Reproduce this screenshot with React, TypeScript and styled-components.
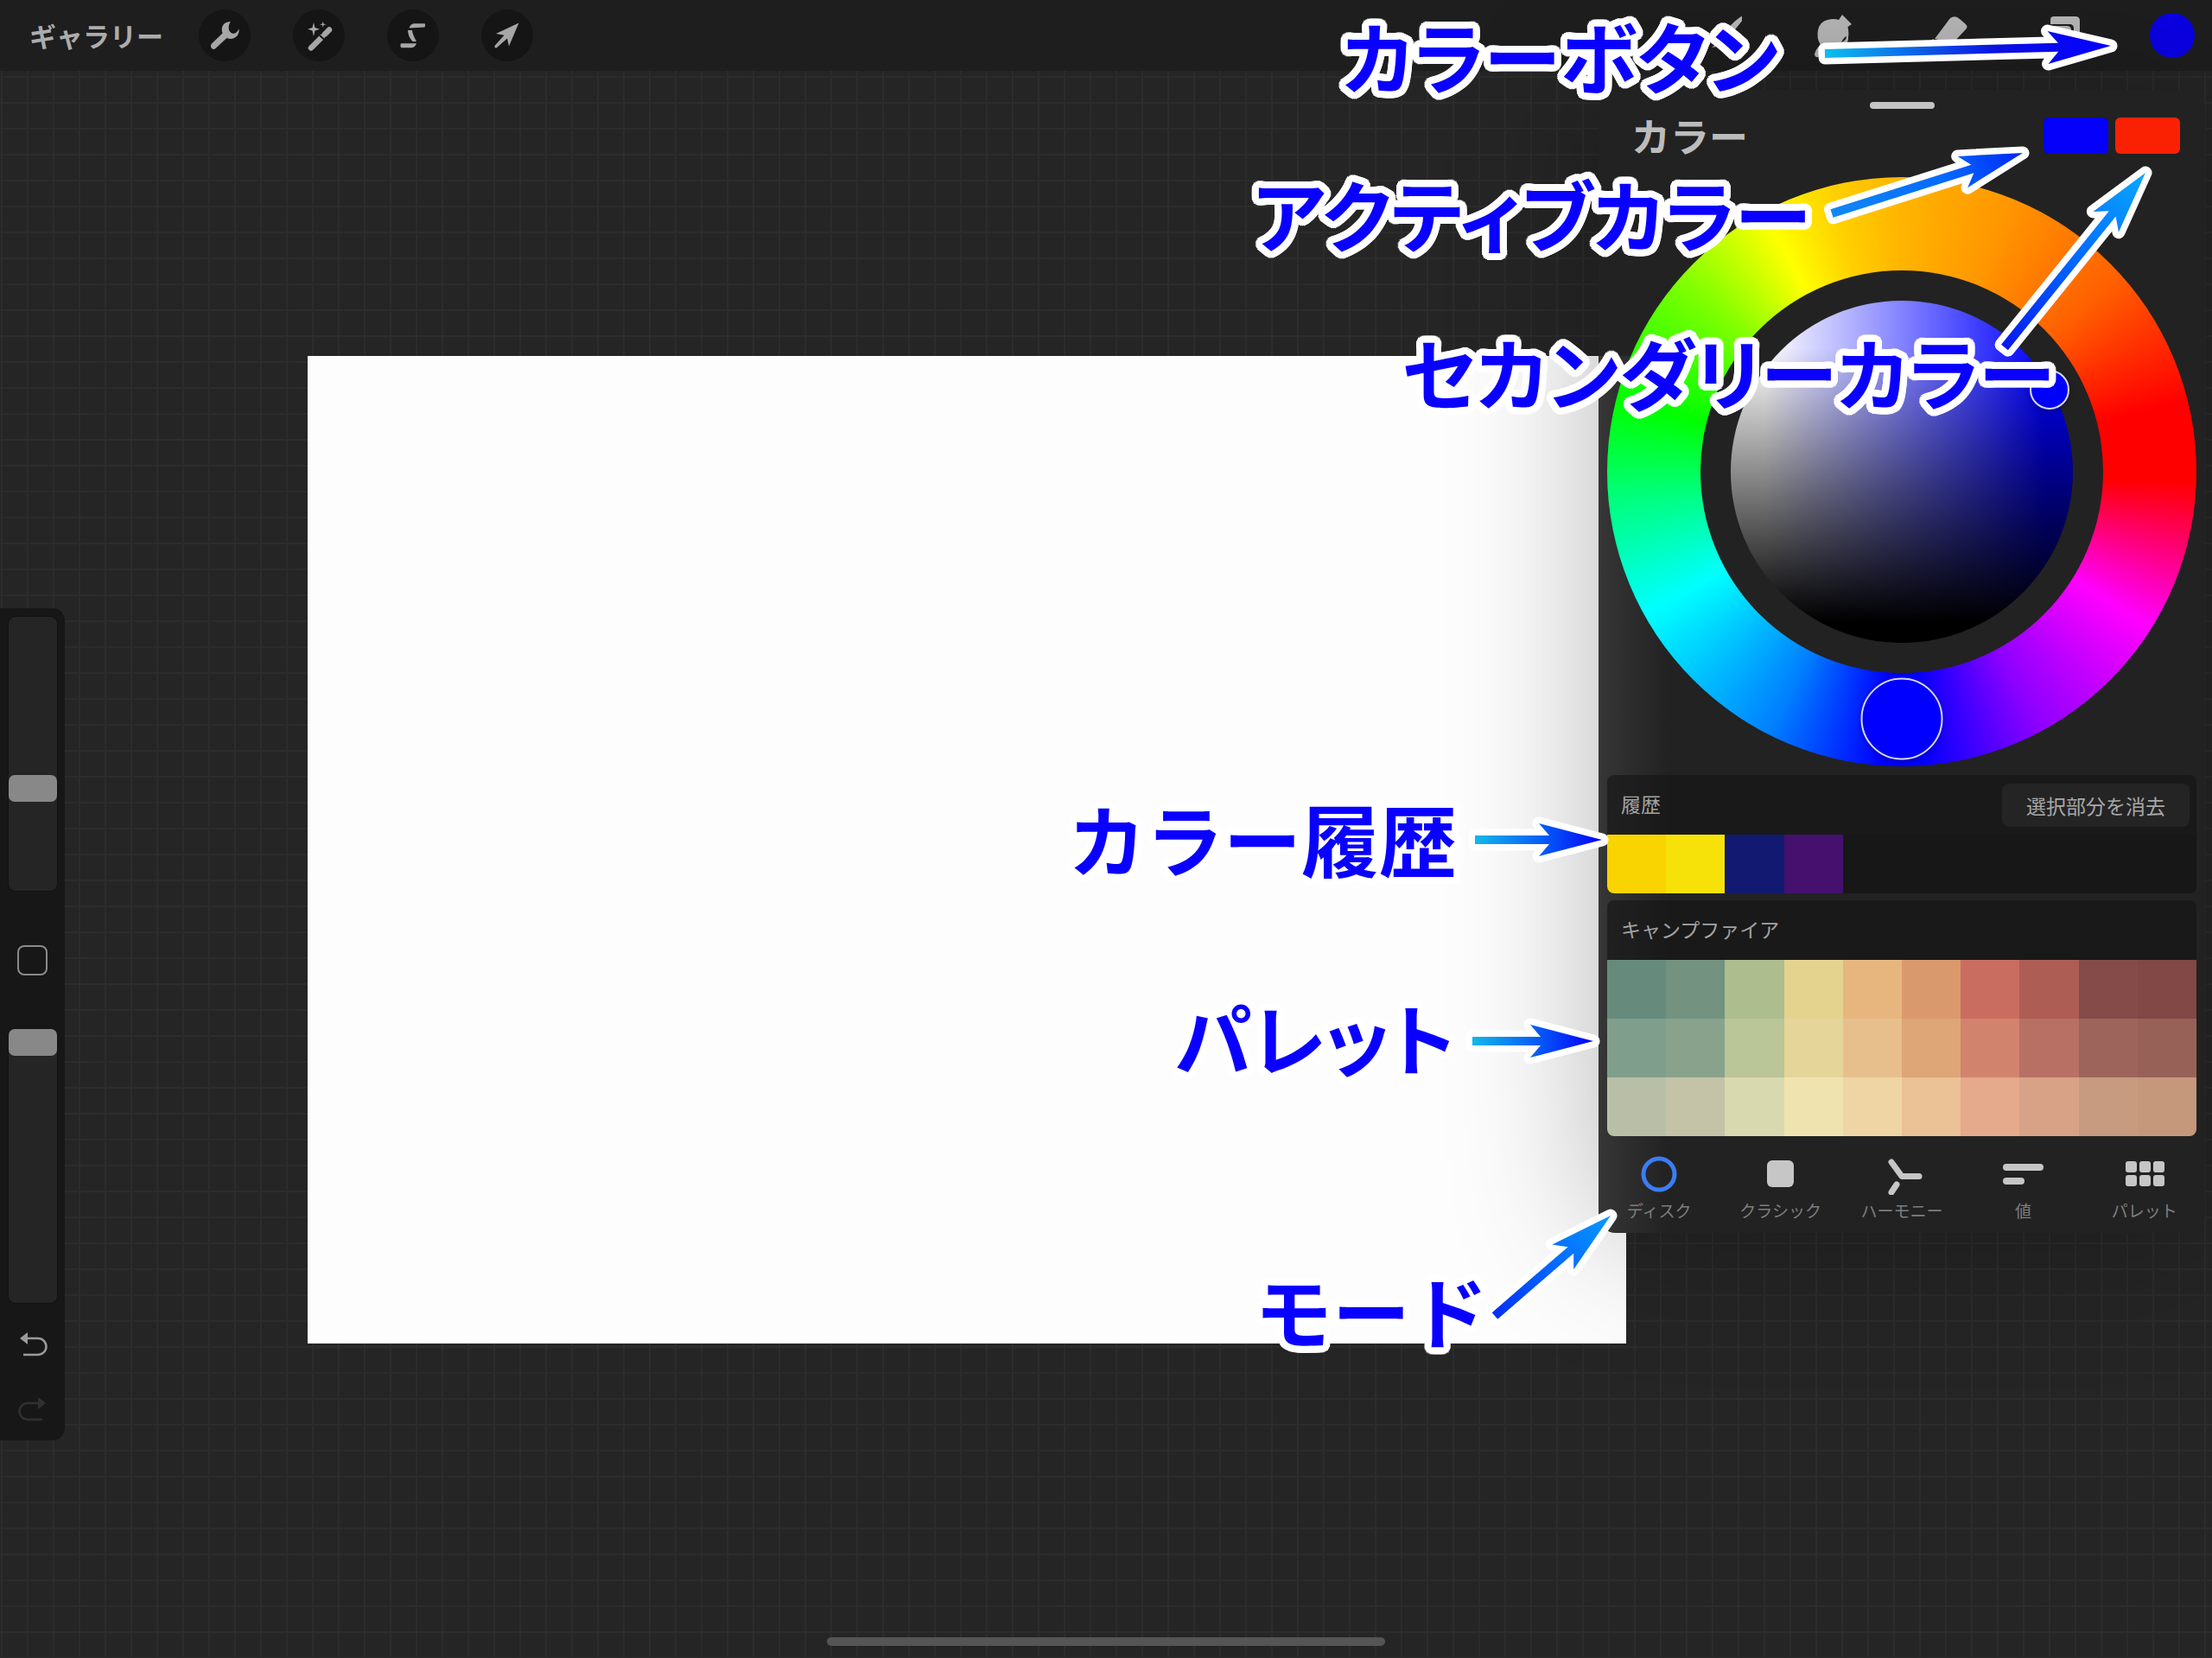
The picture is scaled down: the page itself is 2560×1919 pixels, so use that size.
import React from "react";
import styled, { createGlobalStyle } from "styled-components";

const GlobalStyle = createGlobalStyle`
  *, *::before, *::after { box-sizing: border-box; }
  html, body { margin: 0; background: #252525; }
  body, button, input {
    font-family: "Noto Sans CJK JP", "Noto Sans", sans-serif;
  }
  button { padding: 0; border: 0; background: none; color: inherit; cursor: pointer; }
`;

const Screen = styled.div`
  position: relative;
  display: flex;
  flex-direction: column;
  min-height: 100vh;
  overflow: hidden;
`;

/* ---------- toolbar ---------- */

const Toolbar = styled.header`
  display: flex;
  align-items: center;
  justify-content: space-between;
  height: 82px;
  padding: 0 20px 0 34px;
  background: #1e1e1e;
`;

const ToolGroup = styled.div<{ $gap: number }>`
  display: flex;
  align-items: center;
  gap: ${(p) => p.$gap}px;
`;

const GalleryButton = styled.button`
  width: 160px;
  margin-right: -13px;
  color: #acacac;
  font-size: 31px;
  font-weight: 700;
  line-height: 40px;
  text-align: left;
  white-space: nowrap;
`;

const RoundButton = styled.button`
  display: block;
  width: 60px;
  height: 60px;
  border-radius: 50%;
  background: #151515;
  color: #a6a6a6;
`;

const PlainButton = styled(RoundButton)`
  background: none;
  color: #b8b8b8;
`;

const ColorButton = styled.button`
  width: 52px;
  height: 52px;
  border-radius: 50%;
  background: #0a00e6;
`;

/* ---------- workspace ---------- */

const Workspace = styled.main`
  position: relative;
  display: flex;
  flex: 1;
  align-items: flex-start;
  padding-top: 622px;
  background-color: #252525;
  background-image:
    linear-gradient(#2c2c2c 2px, transparent 2px),
    linear-gradient(90deg, #2c2c2c 2px, transparent 2px);
  background-size: 30px 30px;
  background-position: 1px 6px;
`;

const Artboard = styled.div`
  position: absolute;
  top: 330px;
  left: 356px;
  width: 1526px;
  height: 1143px;
  background: #fdfdfd;
`;

const Sidebar = styled.aside`
  position: relative;
  display: flex;
  flex-direction: column;
  align-items: center;
  width: 75px;
  height: 963px;
  padding-top: 10px;
  border-radius: 0 14px 14px 0;
  background: #171717;
`;

const Slider = styled.input`
  appearance: none;
  writing-mode: vertical-lr;
  direction: rtl;
  width: 56px;
  height: 317px;
  margin: 0;
  border-radius: 8px;
  background: #252525;
  box-shadow: 0 0 0 1px #121212;

  &::-webkit-slider-thumb {
    appearance: none;
    width: 56px;
    height: 31px;
    border-radius: 7px;
    background: #888;
  }
`;

const ModifyButton = styled.button`
  width: 35px;
  height: 35px;
  margin: 63px 0 62px;
  border: 2px solid #8a8a8a;
  border-radius: 8px;
`;

const HistoryButton = styled.button<{ $color: string }>`
  display: block;
  width: 40px;
  height: 40px;
  margin-top: 29px;
  color: ${(p) => p.$color};

  & + & { margin-top: 35px; }
`;

const HomeIndicator = styled.div`
  position: absolute;
  bottom: 14px;
  left: 50%;
  width: 646px;
  height: 10px;
  border-radius: 5px;
  background: #555;
  transform: translateX(-50%);
`;

/* ---------- colour panel ---------- */

const Panel = styled.section`
  position: absolute;
  top: 22px;
  right: 8px;
  width: 702px;
  padding: 14px 10px 0;
  border-radius: 20px;
  background: linear-gradient(90deg, #363636, #222 80px) 0 308px no-repeat #222;
  box-shadow: 0 0 170px rgba(0, 0, 0, 0.28);
`;

const Grabber = styled.div`
  width: 75px;
  height: 8px;
  margin: 0 auto 10px;
  border-radius: 4px;
  background: #c4c4c4;
`;

const PanelHeader = styled.div`
  display: flex;
  align-items: center;
  gap: 8px;
  height: 42px;
  padding: 0 19px 0 28px;
`;

const PanelTitle = styled.h1`
  flex: 1;
  margin: 0;
  color: #bcbcbc;
  font-size: 45px;
  font-weight: 700;
  line-height: 42px;
`;

const ChosenColor = styled.button<{ $color: string }>`
  width: 75px;
  height: 42px;
  border-radius: 6px;
  background: ${(p) => p.$color};
`;

const Wheel = styled.div`
  position: relative;
  display: grid;
  place-items: center;
  aspect-ratio: 1;
  margin: 27px 0 10px;
  border-radius: 50%;
  background: conic-gradient(
    #ffb400 0deg, #ff9600 22deg, #ff6000 48deg, #ff0000 76deg, #ff0000 92deg,
    #ff0080 107deg, #ff00ff 122deg, #8c00ff 152deg, #0000ff 176deg, #0000ff 184deg,
    #0080ff 207deg, #00ffff 241deg, #00ff80 264deg, #00ff00 284deg, #80ff00 311deg,
    #ffff00 332deg, #ffd000 346deg, #ffb400 360deg
  );
`;

const WheelHole = styled.div`
  display: grid;
  place-items: center;
  width: 68.4%;
  aspect-ratio: 1;
  border-radius: 50%;
  background: #222;
`;

const ShadeDisc = styled.div`
  width: 84.8%;
  aspect-ratio: 1;
  border-radius: 50%;
  background:
    linear-gradient(transparent 14%, rgba(0, 0, 0, 0.45) 50%, #000 94%),
    linear-gradient(90deg, #fff 10%, #00f 92%);
`;

const WheelMarker = styled.div<{ $size: number; $x: number; $y: number }>`
  position: absolute;
  top: ${(p) => p.$y}%;
  left: ${(p) => p.$x}%;
  width: ${(p) => p.$size}px;
  height: ${(p) => p.$size}px;
  border: 2px solid #d8d8fa;
  border-radius: 50%;
  background: #00f;
  box-shadow: 0 2px 6px rgba(0, 0, 0, 0.3);
  transform: translate(-50%, -50%);
`;

const SwatchSection = styled.section`
  margin-bottom: 8px;
  border-radius: 8px;
  background: rgba(20, 20, 20, 0.6);
`;

const SectionHeader = styled.div`
  display: flex;
  align-items: center;
  justify-content: space-between;
  height: 69px;
  padding: 0 8px 0 16px;
`;

const SectionTitle = styled.h2`
  margin: 0;
  padding-bottom: 4px;
  color: #a2a2a2;
  font-size: 23px;
  font-weight: 400;
  line-height: 32px;
`;

const ClearButton = styled.button`
  width: 217px;
  height: 50px;
  border-radius: 8px;
  background: #242424;
  color: #a8a8a8;
  font-size: 23px;
  line-height: 32px;
`;

const SwatchGrid = styled.div`
  display: grid;
  grid-template-columns: repeat(10, 1fr);
  grid-auto-rows: 68px;
  overflow: hidden;
  border-radius: 0 0 8px 8px;
  background: #171717;
`;

const Swatch = styled.button<{ $color: string }>`
  background: ${(p) => p.$color};
`;

const Tabs = styled.nav`
  display: grid;
  grid-template-columns: repeat(5, 1fr);
  height: 104px;
  margin: 0 -10px;
`;

const Tab = styled.button<{ $active: boolean }>`
  display: flex;
  flex-direction: column;
  align-items: center;
  padding-top: 12px;
  gap: 4px;
  color: ${(p) => (p.$active ? "#3c7cf2" : "#c6c6c6")};
`;

const TabLabel = styled.span`
  color: #7e7e7e;
  font-size: 19px;
  line-height: 28px;
`;

/* ---------- annotations ---------- */

const HALO_RADIUS = 8;

/* A ring of hard shadows gives the letters a white outline with round corners. */
const halo = Array.from({ length: 32 }, (_, i) => {
  const angle = (i / 32) * Math.PI * 2;
  const x = Math.round(Math.cos(angle) * HALO_RADIUS);
  const y = Math.round(Math.sin(angle) * HALO_RADIUS);
  return `${x}px ${y}px 0 #fff`;
})
  .concat(["4px 0 0 #fff", "-4px 0 0 #fff", "0 4px 0 #fff", "0 -4px 0 #fff"])
  .join(", ");

const AnnotationLayer = styled.div`
  position: absolute;
  inset: 0;
  pointer-events: none;
`;

const ArrowSheet = styled.svg`
  position: absolute;
  inset: 0;
  width: 100%;
  height: 100%;
`;

const Note = styled.p<{ $x: number; $y: number; $proportional: boolean }>`
  position: absolute;
  top: ${(p) => p.$y}px;
  left: ${(p) => p.$x}px;
  margin: 0;
  color: #0a00ff;
  font-size: 90px;
  font-weight: 700;
  font-feature-settings: ${(p) => (p.$proportional ? '"palt"' : "normal")};
  line-height: 90px;
  white-space: nowrap;
  text-shadow: ${halo};
`;

/* ---------- data ---------- */

const historyColors = ["#f9d400", "#f6e209", "#111a70", "#45106e"];

const campfire = [
  "#668b7d", "#73927f", "#adbd8e", "#e3d38f", "#e7b67f", "#da996c", "#ca6d61", "#ae5d54", "#854b49", "#814845",
  "#809e8c", "#88a28c", "#bac598", "#e5d598", "#e7bf8d", "#dea577", "#d2836e", "#b87064", "#9c645a", "#976157",
  "#b9bfa6", "#c4c3a7", "#d8d9af", "#efe4af", "#f0d5a4", "#ebc196", "#e5a98b", "#d8a287", "#c69b7f", "#c5987b",
];

const notes = [
  { text: "カラーボタン", x: 1553, y: 18, proportional: true },
  { text: "アクティブカラー", x: 1450, y: 201, proportional: true },
  { text: "セカンダリーカラー", x: 1622, y: 384, proportional: true },
  { text: "カラー履歴", x: 1236, y: 924, proportional: false },
  { text: "パレット", x: 1360, y: 1154, proportional: true },
  { text: "モード", x: 1452, y: 1470, proportional: false },
];

type ArrowProps = { id: string; from: [number, number]; to: [number, number]; colors: string[] };

const arrows: ArrowProps[] = [
  { id: "button", from: [2112, 62], to: [2443, 53], colors: ["#0cc0f0", "#0a10e0 60%", "#0400ff"] },
  { id: "active", from: [2120, 247], to: [2341, 177], colors: ["#1088f4", "#0468ff 60%", "#0028f4"] },
  { id: "secondary", from: [2320, 402], to: [2483, 200], colors: ["#0418f0", "#0468ff 50%", "#08a8ff"] },
  { id: "history", from: [1707, 972], to: [1854, 972], colors: ["#14b8ea", "#0450f8 60%", "#0400f4"] },
  { id: "palette", from: [1704, 1205], to: [1844, 1205], colors: ["#14b8ea", "#0450f8 60%", "#0400f4"] },
  { id: "mode", from: [1730, 1523], to: [1864, 1407], colors: ["#0430f4", "#0468ff 50%", "#0898ff"] },
];

function Arrow({ id, from, to, colors }: ArrowProps) {
  const dx = to[0] - from[0];
  const dy = to[1] - from[1];
  const length = Math.hypot(dx, dy);
  const angle = (Math.atan2(dy, dx) * 180) / Math.PI;
  const neck = length - 61;
  const barb = length - 73;
  const shape = `M0 -5 H${neck} L${barb} -19 L${length} 0 L${barb} 19 L${neck} 5 H0 Z`;
  return (
    <g transform={`translate(${from[0]} ${from[1]}) rotate(${angle})`}>
      <linearGradient id={id} gradientUnits="userSpaceOnUse" x1="0" y1="0" x2={length} y2="0">
        {colors.map((entry, i) => {
          const [color, offset] = entry.split(" ");
          return <stop key={entry} offset={offset ?? (i === 0 ? "0%" : "100%")} stopColor={color} />;
        })}
      </linearGradient>
      <path d={shape} fill="#fff" stroke="#fff" strokeWidth="15" strokeLinejoin="round" />
      <path d={shape} fill={`url(#${id})`} />
    </g>
  );
}

/* ---------- icons ---------- */

const Icon = ({ size, children }: { size: number; children: React.ReactNode }) => (
  <svg width={size} height={size} viewBox={`0 0 ${size} ${size}`} fill="currentColor" display="block" aria-hidden>
    {children}
  </svg>
);

const leftTools = [
  {
    label: "アクション",
    art: <path d="M37 14C29 14 25 20 27.500 27.500L15 39.500C12 43 16 48 19.500 45L32.500 33C40 36 47.500 31 46.500 22.500C44 27.500 41 29 37.500 27C33.500 24.500 34 18 37 14Z" />,
  },
  {
    label: "調整",
    art: (
      <>
        <path d="M21 44.500L33.500 32M37 28.500L42 23.500" fill="none" stroke="currentColor" strokeWidth="6.500" strokeLinecap="round" />
        <path d="M31 30L36.500 35" stroke="#151515" strokeWidth="2" />
        <path d="M24 15L25.500 21L31 22.700L25.500 24.400L24 31L22.500 24.400L17 22.700L22.500 21Z M34.700 13.500L35.500 16.500L38.500 17.300L35.500 18L34.700 21L34 18L31 17.300L34 16.500Z" />
      </>
    ),
  },
  {
    label: "選択",
    art: <path d="M25.500 21.500Q27 16.500 31 16.300H43Q45 16.500 43.500 20.500Z M24 24H29Q29.500 29 34 37H29.500Q24 31 24 24Z M15.500 40.500Q15.500 39.300 17 39.300H34Q32.500 44 28.500 44.300H17Q15.500 44 15.500 42.500Z" />,
  },
  {
    label: "変形",
    art: <path d="M43.500 15.500L32 42.500L30 33.500L17.500 44.500Q15 45 15.500 42L26.500 29.800L17 28Z" />,
  },
];

const rightTools = [
  { label: "ペイント", art: <path d="M61 7Q63 8 61 12L49 27L43 23Q52 12 61 7ZM41 25L47 29Q43 42 25 44Q31 40 33 33Q35 27 41 25Z" /> },
  { label: "ぼかし", art: <path d="M43 6L54 17L49.500 20Q51 28 50 32Q51 37 46 40Q43 43 39 40L27 42Q23 48 17 54Q12 57 11 52Q12 46 18 41Q13 33 15 24Q17 14 26 12Q34 10 39 12ZM42 38Q48 36 48 31Q45 32 42 38Z" /> },
  { label: "消しゴム", art: <path d="M35 10Q41 6 46 11L53 17Q56 20 53 23L39 38L34 38L17 34Z M15 34L33 46Q30 51 24 49L12 42Q11 38 15 34Z" /> },
  { label: "レイヤー", art: <path d="M22 8H47Q52 8 52 13V38Q52 42 48 42H45V22Q45 17 40 17H18V12Q18 8 22 8ZM16 19H37Q42 19 42 24V44Q42 48 38 48H17Q12 48 12 43V23Q12 19 16 19Z" /> },
];

const tabs = [
  { label: "ディスク", art: <circle cx="24" cy="24" r="18" fill="none" stroke="currentColor" strokeWidth="5" /> },
  { label: "クラシック", art: <rect x="8" y="8" width="31" height="31" rx="6" /> },
  {
    label: "ハーモニー",
    art: <path d="M12 10L24 26.500H44M18 36L12 45" fill="none" stroke="currentColor" strokeWidth="7" strokeLinecap="round" strokeLinejoin="round" />,
  },
  {
    label: "値",
    art: (
      <>
        <rect x="1" y="12" width="47" height="8" rx="4" />
        <rect x="1" y="28" width="25" height="8" rx="4" />
      </>
    ),
  },
  {
    label: "パレット",
    art: [0, 1, 2, 3, 4, 5].map((i) => (
      <rect key={i} x={2 + (i % 3) * 16} y={9 + Math.floor(i / 3) * 16} width="13" height="13" rx="3" />
    )),
  },
];

export default function App() {
  return (
    <Screen>
      <GlobalStyle />
      <Toolbar>
        <ToolGroup $gap={49}>
          <GalleryButton type="button">ギャラリー</GalleryButton>
          {leftTools.map((tool) => (
            <RoundButton key={tool.label} type="button" aria-label={tool.label}>
              <Icon size={60}>{tool.art}</Icon>
            </RoundButton>
          ))}
        </ToolGroup>
        <ToolGroup $gap={73}>
          {rightTools.map((tool) => (
            <PlainButton key={tool.label} type="button" aria-label={tool.label}>
              <Icon size={60}>{tool.art}</Icon>
            </PlainButton>
          ))}
          <ColorButton type="button" aria-label="カラー" />
        </ToolGroup>
      </Toolbar>

      <Workspace>
        <Artboard />
        <Sidebar>
          <Slider type="range" aria-label="ブラシサイズ" defaultValue={36} />
          <ModifyButton type="button" aria-label="スポイト" />
          <Slider type="range" aria-label="不透明度" defaultValue={100} />
          <HistoryButton type="button" aria-label="取り消す" $color="#9a9a9a">
            <Icon size={40}>
              <path d="M5 12L14 5V19Z" />
              <path d="M12 12H26A9.500 9.500 0 0 1 26 31H9" fill="none" stroke="currentColor" strokeWidth="2.500" />
            </Icon>
          </HistoryButton>
          <HistoryButton type="button" aria-label="やり直す" $color="#303030">
            <Icon size={40}>
              <path d="M35 12L26 5V19Z" />
              <path d="M28 12H14A9.500 9.500 0 0 0 14 31H31" fill="none" stroke="currentColor" strokeWidth="2.500" />
            </Icon>
          </HistoryButton>
        </Sidebar>

        <Panel>
          <Grabber />
          <PanelHeader>
            <PanelTitle>カラー</PanelTitle>
            <ChosenColor type="button" aria-label="アクティブカラー" $color="#0500fa" />
            <ChosenColor type="button" aria-label="セカンダリーカラー" $color="#fa2103" />
          </PanelHeader>
          <Wheel>
            <WheelHole>
              <ShadeDisc />
            </WheelHole>
            <WheelMarker $size={95} $x={50} $y={92} />
            <WheelMarker $size={46} $x={75} $y={36} />
          </Wheel>
          <SwatchSection>
            <SectionHeader>
              <SectionTitle>履歴</SectionTitle>
              <ClearButton type="button">選択部分を消去</ClearButton>
            </SectionHeader>
            <SwatchGrid>
              {historyColors.map((color) => (
                <Swatch key={color} type="button" aria-label={color} $color={color} />
              ))}
            </SwatchGrid>
          </SwatchSection>
          <SwatchSection>
            <SectionHeader>
              <SectionTitle>キャンプファイア</SectionTitle>
            </SectionHeader>
            <SwatchGrid>
              {campfire.map((color) => (
                <Swatch key={color} type="button" aria-label={color} $color={color} />
              ))}
            </SwatchGrid>
          </SwatchSection>
          <Tabs>
            {tabs.map((tab, i) => (
              <Tab key={tab.label} type="button" $active={i === 0}>
                <Icon size={48}>{tab.art}</Icon>
                <TabLabel>{tab.label}</TabLabel>
              </Tab>
            ))}
          </Tabs>
        </Panel>
        <HomeIndicator />
      </Workspace>

      <AnnotationLayer>
        {notes.map((note) => (
          <Note key={note.text} $x={note.x} $y={note.y} $proportional={note.proportional}>
            {note.text}
          </Note>
        ))}
        <ArrowSheet aria-hidden>
          {arrows.map((arrow) => (
            <Arrow key={arrow.id} {...arrow} />
          ))}
        </ArrowSheet>
      </AnnotationLayer>
    </Screen>
  );
}
